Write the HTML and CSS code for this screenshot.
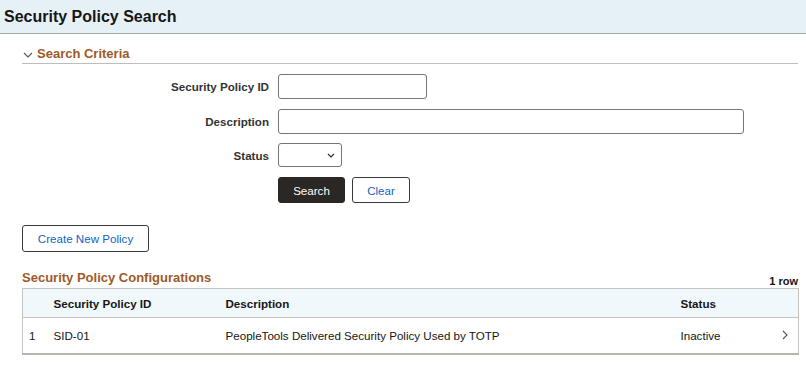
FILE: index.html
```html
<!DOCTYPE html>
<html lang="en">
<head>
  <meta charset="UTF-8">
  <title>Security Policy Search</title>
  <link rel="stylesheet" href="styles.css">
</head>
<body>
  <div class="sp-page">
    <div class="sp-header">
      <h1>Security Policy Search</h1>
    </div>
    <div class="sp-content">
      <div class="sp-section-title">
        <svg class="sp-chevron" width="10" height="6" viewBox="0 0 10 6"><path d="M1 1l4 4 4-4" fill="none" stroke="#555" stroke-width="1.1"/></svg>
        <span>Search Criteria</span>
      </div>
      <div class="sp-form">
        <div class="sp-row">
          <label class="sp-label">Security Policy ID</label>
          <input class="sp-input sp-input-id" type="text">
        </div>
        <div class="sp-row">
          <label class="sp-label">Description</label>
          <input class="sp-input sp-input-desc" type="text">
        </div>
        <div class="sp-row sp-row-status">
          <label class="sp-label">Status</label>
          <div class="sp-select">
            <svg width="8" height="5" viewBox="0 0 8 5"><path d="M1 1l3 3 3-3" fill="none" stroke="#333" stroke-width="1.2"/></svg>
          </div>
        </div>
        <div class="sp-row sp-buttons">
          <span class="sp-label"></span>
          <button class="sp-btn sp-btn-primary">Search</button>
          <button class="sp-btn">Clear</button>
        </div>
      </div>
      <button class="sp-btn sp-btn-create">Create New Policy</button>
      <div class="sp-grid-head">
        <h2>Security Policy Configurations</h2>
        <span class="sp-count">1 row</span>
      </div>
      <table class="sp-table">
        <thead>
          <tr>
            <th class="sp-col-num"></th>
            <th class="sp-col-id">Security Policy ID</th>
            <th class="sp-col-desc">Description</th>
            <th class="sp-col-status">Status</th>
            <th class="sp-col-go"></th>
          </tr>
        </thead>
        <tbody>
          <tr>
            <td class="sp-col-num">1</td>
            <td>SID-01</td>
            <td>PeopleTools Delivered Security Policy Used by TOTP</td>
            <td>Inactive</td>
            <td class="sp-col-go">
              <svg width="6" height="10" viewBox="0 0 6 10"><path d="M1 1l4 4-4 4" fill="none" stroke="#555" stroke-width="1.1"/></svg>
            </td>
          </tr>
        </tbody>
      </table>
    </div>
  </div>
</body>
</html>
```

FILE: styles.css
```css
body {
  margin: 0;
  font-family: "Liberation Sans", Arial, sans-serif;
  color: #333;
  background: #fff;
}

.sp-header {
  height: 33px;
  background-color: #e5f1f5;
  border-bottom: 1px solid #a6a6a6;
  display: flex;
  align-items: center;
  padding: 0 4px;
}

.sp-header h1 {
  margin: 0;
  font-size: 16px;
  font-weight: 700;
  color: #161616;
}

.sp-content {
  padding: 10px 8px 0 22px;
}

.sp-section-title {
  display: flex;
  align-items: center;
  gap: 4px;
  height: 19px;
  border-bottom: 1px solid #bdbdbd;
  font-size: 13px;
  font-weight: 700;
  color: #9e5a28;
}

.sp-chevron {
  margin-left: 1px;
  margin-top: 2px;
}

.sp-form {
  display: flex;
  flex-direction: column;
  gap: 10px;
  padding-top: 10px;
}

.sp-row {
  display: flex;
  align-items: center;
  gap: 9px;
}

.sp-row-status {
  margin-top: -1px;
}

.sp-label {
  width: 247px;
  text-align: right;
  font-size: 11.6px;
  font-weight: 700;
  color: #333;
}

.sp-input {
  height: 25px;
  box-sizing: border-box;
  border: 1px solid #7a7570;
  border-radius: 3px;
  margin: 0;
  padding: 0 5px;
}

.sp-input-id {
  width: 149px;
}

.sp-input-desc {
  width: 466px;
}

.sp-select {
  width: 64px;
  height: 24px;
  box-sizing: border-box;
  border: 1px solid #7a7570;
  border-radius: 3px;
  display: flex;
  align-items: center;
  justify-content: flex-end;
  padding-right: 6px;
}

.sp-buttons {
  gap: 0;
}

.sp-buttons .sp-label {
  margin-right: 9px;
}

.sp-btn {
  height: 26px;
  box-sizing: border-box;
  padding: 0;
  font-family: "Liberation Sans", Arial, sans-serif;
  font-size: 11.6px;
  color: #1264c2;
  background: #fff;
  border: 1px solid #3a3a3a;
  border-radius: 3px;
  margin: 0 7px 0 0;
  width: 58px;
}

.sp-btn-primary {
  background-color: #2b2725;
  border-color: #2b2725;
  color: #fff;
  width: 67px;
}

.sp-btn-create {
  display: block;
  margin-top: 22px;
  width: 127px;
  height: 27px;
}

.sp-grid-head {
  display: flex;
  justify-content: space-between;
  align-items: flex-end;
  margin-top: 17px;
  height: 19px;
}

.sp-grid-head h2 {
  margin: 0;
  font-size: 13px;
  font-weight: 700;
  color: #9e5a28;
  padding-bottom: 3px;
}

.sp-count {
  font-size: 11px;
  font-weight: 700;
  color: #161616;
  padding-bottom: 1px;
}

.sp-table {
  width: 777px;
  border-collapse: collapse;
  font-size: 11.6px;
  color: #161616;
  border: 1px solid #c7c3bf;
  border-bottom: 2px solid #b8b4b0;
}

.sp-table th {
  background-color: #f1f8fb;
  height: 28px;
  text-align: left;
  font-weight: 700;
  padding: 0;
  border-bottom: 1px solid #c7c3bf;
}

.sp-table td {
  height: 35px;
  padding: 0;
}

.sp-col-num {
  width: 31px;
  padding-left: 6px !important;
  box-sizing: border-box;
}

.sp-col-id {
  width: 172px;
}

.sp-col-desc {
  width: 455px;
}

.sp-col-status {
  width: 97px;
}

.sp-col-go {
  text-align: right;
  padding-right: 10px !important;
}
```
